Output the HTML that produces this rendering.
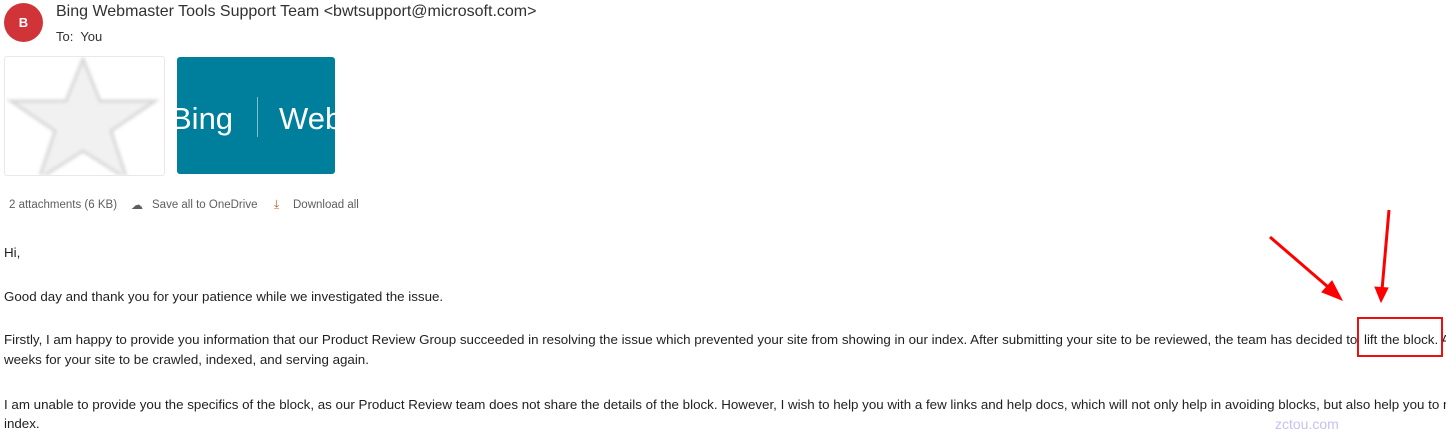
<!DOCTYPE html>
<html><head><style>
body{margin:0;width:1446px;height:445px;overflow:hidden;background:#fff;font-family:"Liberation Sans",sans-serif;color:#201f1e;position:relative}
.a{position:absolute;white-space:nowrap}
p{position:absolute;left:4px;margin:0;font-size:13.35px;white-space:nowrap;line-height:20px}
</style></head><body>
<div class="a" style="left:4px;top:3px;width:39px;height:39px;border-radius:50%;background:#d13438;color:#fff;font-weight:bold;font-size:13px;text-align:center;line-height:39px">B</div>
<div class="a" style="left:56px;top:3px;font-size:16px;color:#323130">Bing Webmaster Tools Support Team &lt;bwtsupport@microsoft.com&gt;</div>
<div class="a" style="left:56px;top:29px;font-size:13px;color:#323130">To:&nbsp; You</div>
<div class="a" style="left:4px;top:56px;width:159px;height:118px;border:1px solid #e8e8e8;border-radius:3px;overflow:hidden;background:#fff">
<svg width="159" height="118" style="filter:blur(1.5px)"><polygon points="78,2 95,44 150,44 106,74 122,122 78,94 34,122 50,74 6,44 61,44" fill="#f1f1f1" stroke="#d8d8d8" stroke-width="3"/></svg></div>
<div class="a" style="left:177px;top:57px;width:158px;height:117px;background:#007f9c;border-radius:3px;overflow:hidden;color:#fff">
<div class="a" style="left:-6px;top:44px;font-size:31px">Bing</div>
<div class="a" style="left:80px;top:40px;width:1px;height:40px;background:#7fc0cf"></div>
<div class="a" style="left:102px;top:44px;font-size:31px">Web</div></div>
<div class="a" style="left:9px;top:199px;font-size:11.5px;color:#605e5c">2 attachments (6 KB)</div>
<div class="a" style="left:131px;top:198px;font-size:12px;color:#605e5c">☁</div>
<div class="a" style="left:152px;top:199px;font-size:11.5px;color:#605e5c">Save all to OneDrive</div>
<div class="a" style="left:274px;top:197px;font-size:12px;color:#c0622a">⤓</div>
<div class="a" style="left:293px;top:199px;font-size:11.5px;color:#605e5c">Download all</div>
<p style="top:243px">Hi,</p>
<p style="top:287px">Good day and thank you for your patience while we investigated the issue.</p>
<p style="top:330px">Firstly, I am happy to provide you information that our Product Review Group succeeded in resolving the issue which prevented your site from showing in our index. After submitting your site to be reviewed, the team has decided to</p>
<p style="top:330px;left:1364px">lift the block. A</p>
<p style="top:350px">weeks for your site to be crawled, indexed, and serving again.</p>
<p style="top:395px">I am unable to provide you the specifics of the block, as our Product Review team does not share the details of the block. However, I wish to help you with a few links and help docs, which will not only help in avoiding blocks, but also help you to m</p>
<p style="top:414px">index.</p>
<div class="a" style="left:1357px;top:317px;width:86px;height:40px;border:2px solid #e81010;box-sizing:border-box"></div>
<svg class="a" style="left:0;top:0" width="1446" height="445"><g stroke="#f00" stroke-width="3" fill="#f00">
<line x1="1270" y1="237" x2="1335" y2="293"/><polygon points="1342,300 1322,292 1332,281" stroke-width="1"/>
<line x1="1389" y1="210" x2="1382" y2="290"/><polygon points="1381,302 1375,287 1388,288" stroke-width="1"/></g></svg>
<div class="a" style="left:1275px;top:416px;font-size:14px;color:#c8c0f0">zctou.com</div>
</body></html>
